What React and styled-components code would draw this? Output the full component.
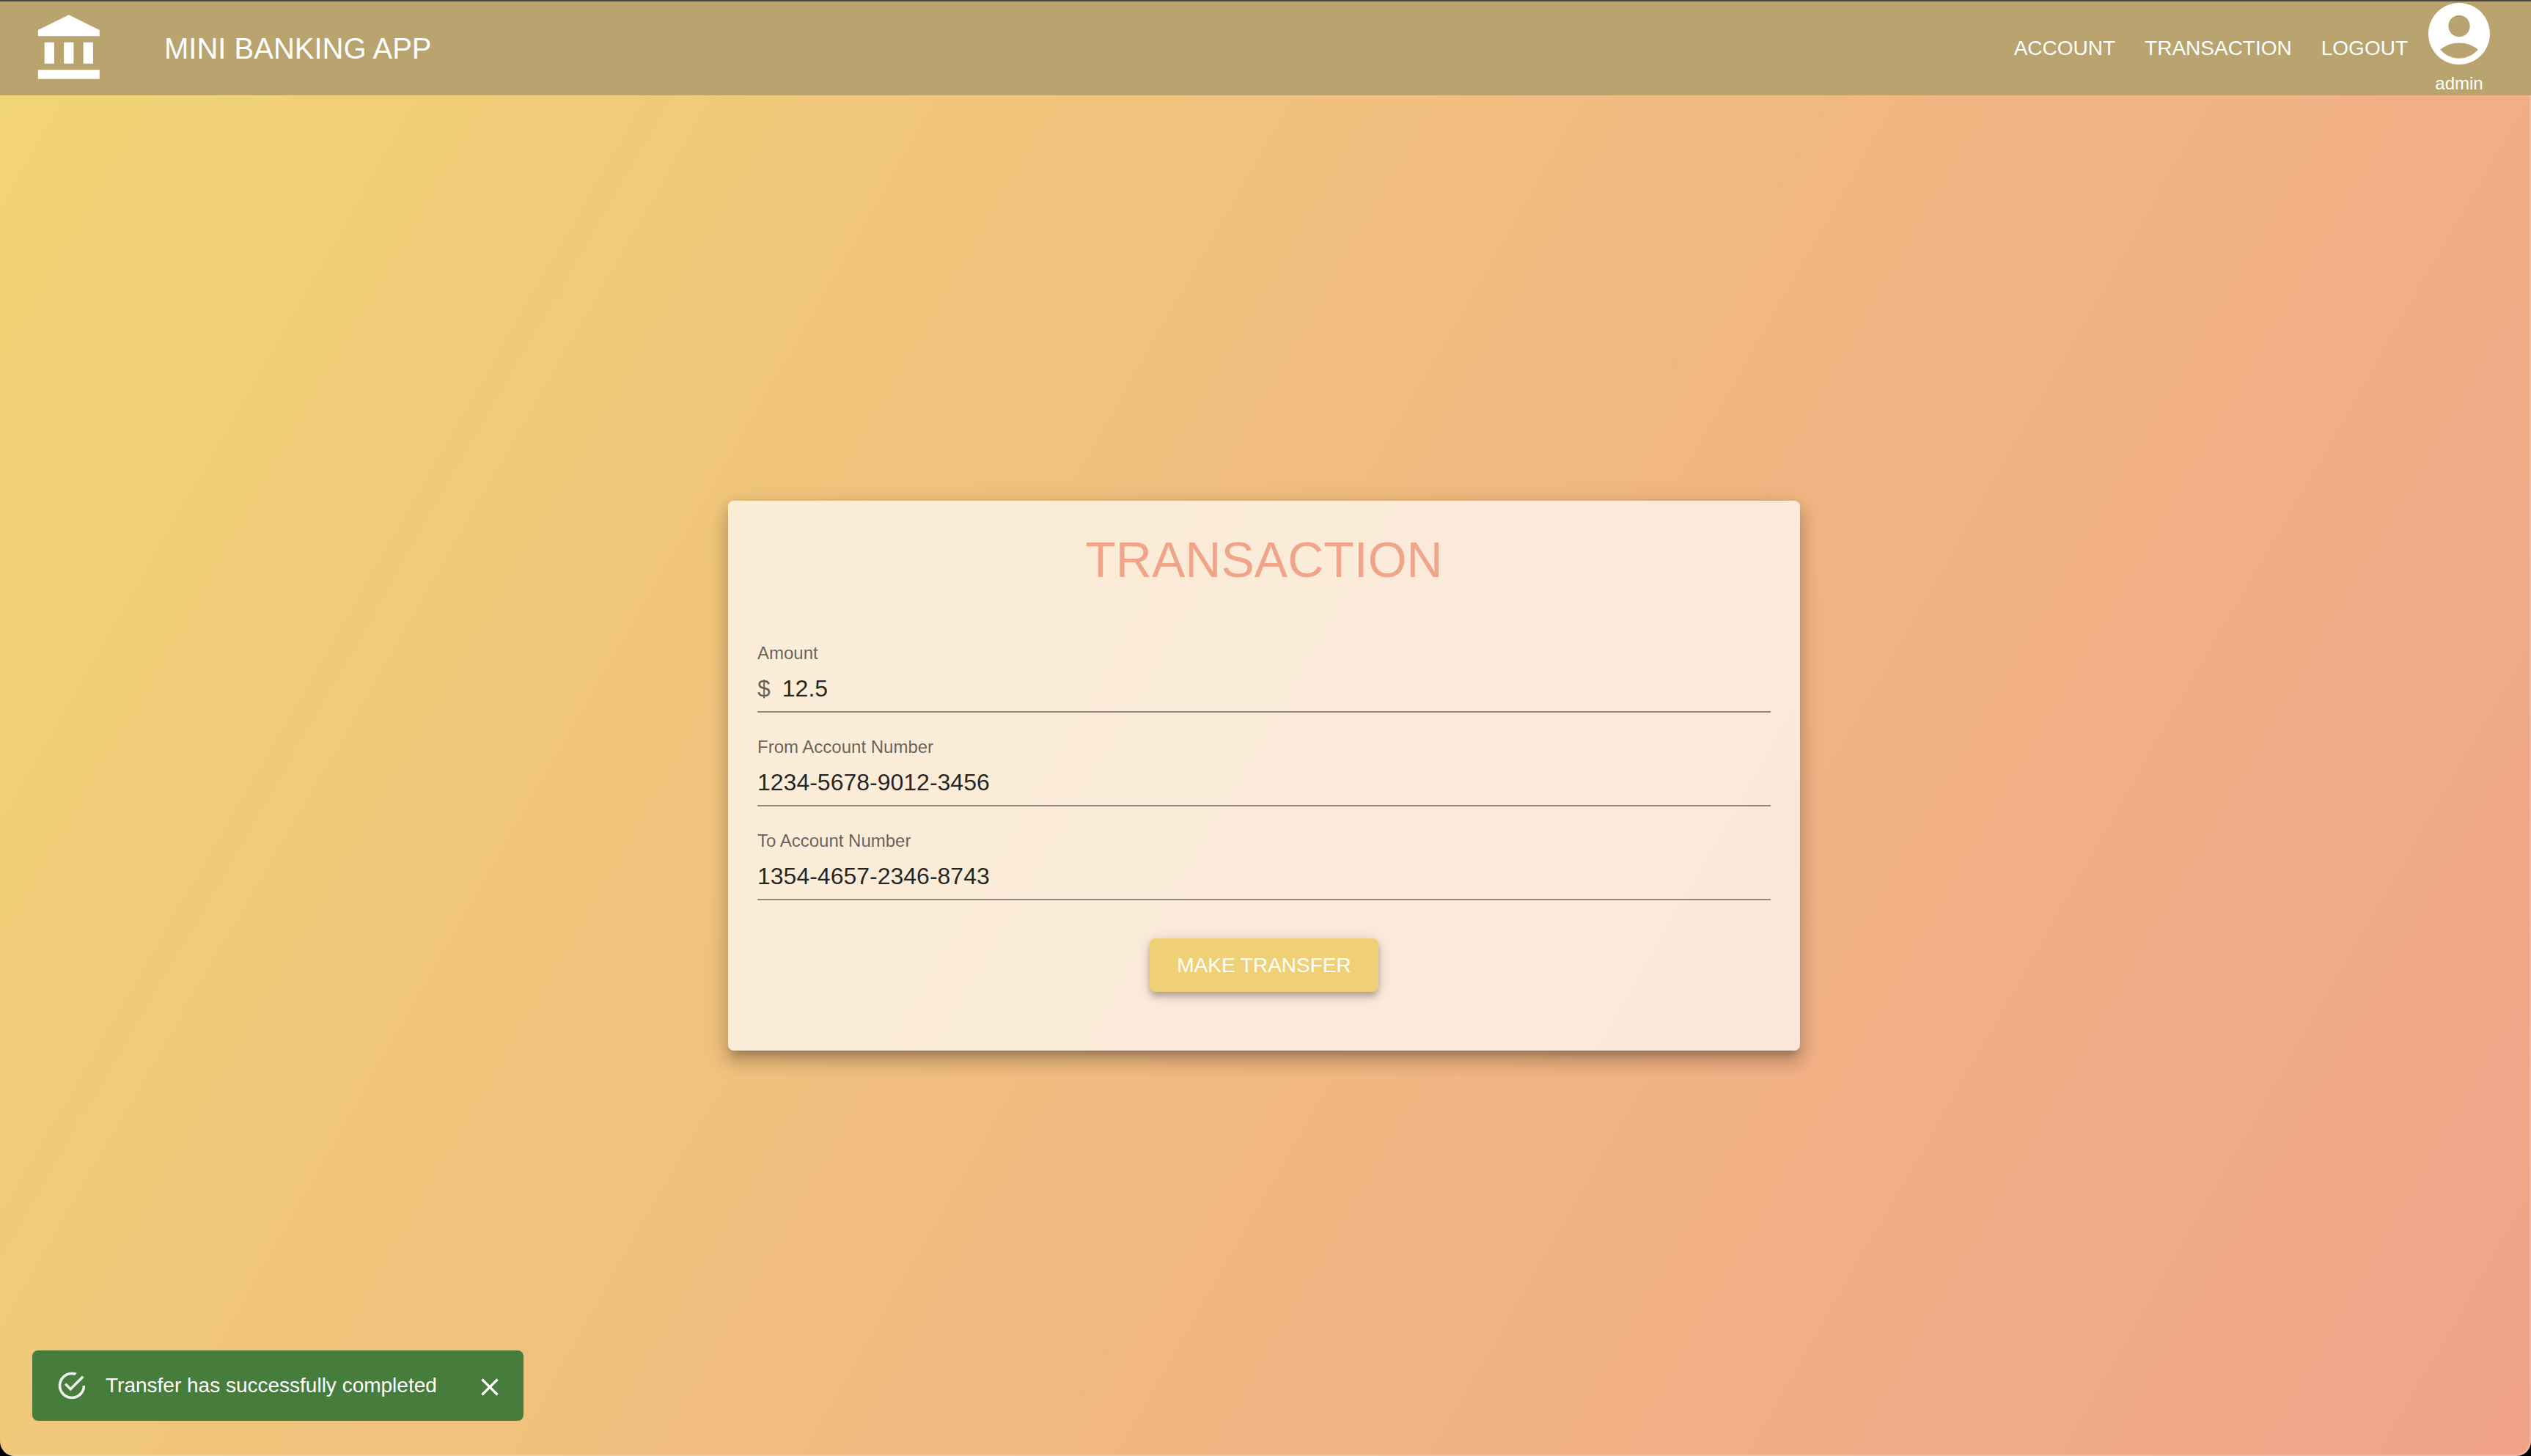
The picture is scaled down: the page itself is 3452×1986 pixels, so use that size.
import React, { useState } from "react";
import styled, { createGlobalStyle } from "styled-components";

const GlobalStyle = createGlobalStyle`
  *, *::before, *::after { box-sizing: border-box; }
  body {
    margin: 0;
    background: #000;
    font-family: "Liberation Sans", Helvetica, Arial, sans-serif;
  }
`;

const Page = styled.div`
  display: flex;
  flex-direction: column;
  min-height: 100vh;
  overflow: hidden;
  border-top: 2px solid #474747;
  border-radius: 0 0 20px 20px;
  background: linear-gradient(120deg, #f1d574, #f0bb80 50%, #f0a38a);
  box-shadow: inset -2px -2px 0 rgba(255, 255, 255, 0.2);
`;

const AppBar = styled.header`
  display: flex;
  align-items: center;
  height: 128px;
  padding: 0 56px 0 43px;
  color: #fff;
  background: #b9a36f;
`;

const BankIcon = styled.svg`
  width: 106px;
  height: 100px;
  fill: currentColor;
`;

const Brand = styled.h1`
  flex: 1;
  margin: 0;
  padding-left: 75px;
  font-size: 40px;
  font-weight: 400;
  line-height: 64px;
`;

const Nav = styled.nav`
  display: flex;
`;

const NavLink = styled.a`
  padding: 12px 20px;
  color: inherit;
  font-size: 28px;
  line-height: 48px;
  text-decoration: none;
`;

const Profile = styled.div`
  display: flex;
  flex-direction: column;
  align-items: center;
  gap: 12px;
  padding-left: 8px;
  font-size: 24px;
  line-height: 28px;
`;

const Avatar = styled.svg`
  width: 84px;
  height: 84px;
  fill: currentColor;
`;

const Main = styled.main`
  display: flex;
  flex: 1;
  align-items: center;
  justify-content: center;
  padding-right: 4px;
`;

const Card = styled.form`
  display: flex;
  flex-direction: column;
  width: 100%;
  max-width: 1462px;
  padding: 40px 40px 80px;
  border-radius: 8px;
  background: rgba(255, 255, 255, 0.7);
  box-shadow:
    0 10px 10px -6px rgba(0, 0, 0, 0.2),
    0 16px 20px 2px rgba(0, 0, 0, 0.14),
    0 6px 28px 4px rgba(0, 0, 0, 0.12);
`;

const CardTitle = styled.h2`
  margin: 0 0 73px;
  color: #f0a58a;
  font-size: 68px;
  font-weight: 400;
  line-height: 80px;
  text-align: center;
`;

const Fields = styled.div`
  display: flex;
  flex-direction: column;
  gap: 32px;
`;

const FieldBox = styled.div`
  display: flex;
  flex-direction: column;
  gap: 10px;
`;

const Label = styled.label`
  color: rgba(0, 0, 0, 0.6);
  font-size: 24px;
  line-height: 30px;
`;

const InputRow = styled.div`
  display: flex;
  gap: 16px;
  padding-bottom: 8px;
  border-bottom: 2px solid rgba(0, 0, 0, 0.42);
  font-size: 32px;
  line-height: 46px;
`;

const Prefix = styled.span`
  color: rgba(0, 0, 0, 0.6);
`;

const Input = styled.input`
  flex: 1;
  min-width: 0;
  height: 46px;
  padding: 0;
  border: 0;
  outline: 0;
  color: rgba(0, 0, 0, 0.87);
  background: transparent;
  font: inherit;
`;

const SubmitButton = styled.button`
  align-self: center;
  min-width: 312px;
  margin-top: 52px;
  padding: 12px 32px;
  border: 0;
  border-radius: 8px;
  color: #fff;
  background: #efd077;
  font-family: inherit;
  font-size: 28px;
  line-height: 49px;
  box-shadow:
    0 4px 8px -2px rgba(0, 0, 0, 0.2),
    0 8px 10px rgba(0, 0, 0, 0.14),
    0 2px 20px rgba(0, 0, 0, 0.12);
`;

const Toast = styled.div`
  position: fixed;
  bottom: 48px;
  left: 44px;
  display: flex;
  align-items: center;
  min-width: 670px;
  height: 96px;
  padding: 0 26px 0 32px;
  border-radius: 8px;
  color: #fff;
  background: #467d3c;
`;

const ToastIcon = styled.svg`
  width: 44px;
  height: 44px;
  fill: currentColor;
  opacity: 0.9;
`;

const ToastText = styled.p`
  flex: 1;
  margin: 0;
  padding: 0 36px 0 24px;
  font-size: 28px;
  line-height: 40px;
`;

const CloseButton = styled.button`
  display: flex;
  margin-top: 4px;
  padding: 0;
  border: 0;
  color: inherit;
  background: transparent;

  svg {
    width: 40px;
    height: 40px;
    fill: currentColor;
  }
`;

function Field({ id, label, prefix, initial }) {
  const [value, setValue] = useState(initial);
  return (
    <FieldBox>
      <Label htmlFor={id}>{label}</Label>
      <InputRow>
        {prefix && <Prefix>{prefix}</Prefix>}
        <Input id={id} value={value} onChange={(e) => setValue(e.target.value)} />
      </InputRow>
    </FieldBox>
  );
}

export default function App() {
  const [open, setOpen] = useState(true);
  return (
    <Page>
      <GlobalStyle />
      <AppBar>
        <BankIcon viewBox="0 0 24 24" preserveAspectRatio="none" aria-hidden="true">
          <path d="M4 10v7h3v-7H4zm6 0v7h3v-7h-3zM2 22h19v-3H2v3zm14-12v7h3v-7h-3zm-4.5-9L2 6v2h19V6l-9.5-5z" />
        </BankIcon>
        <Brand>MINI BANKING APP</Brand>
        <Nav>
          <NavLink href="#account">ACCOUNT</NavLink>
          <NavLink href="#transaction">TRANSACTION</NavLink>
          <NavLink href="#logout">LOGOUT</NavLink>
        </Nav>
        <Profile>
          <Avatar viewBox="2 2 20 20" aria-hidden="true">
            <path d="M12 2C6.48 2 2 6.48 2 12s4.48 10 10 10 10-4.48 10-10S17.52 2 12 2zm0 4c1.93 0 3.5 1.57 3.5 3.5S13.93 13 12 13s-3.5-1.57-3.5-3.5S10.07 6 12 6zm0 14c-2.03 0-4.43-.82-6.14-2.88C7.55 15.8 9.68 15 12 15s4.45.8 6.14 2.12C16.43 19.18 14.03 20 12 20z" />
          </Avatar>
          <span>admin</span>
        </Profile>
      </AppBar>
      <Main>
        <Card onSubmit={(e) => e.preventDefault()}>
          <CardTitle>TRANSACTION</CardTitle>
          <Fields>
            <Field id="amount" label="Amount" prefix="$" initial="12.5" />
            <Field id="from" label="From Account Number" initial="1234-5678-9012-3456" />
            <Field id="to" label="To Account Number" initial="1354-4657-2346-8743" />
          </Fields>
          <SubmitButton type="submit">MAKE TRANSFER</SubmitButton>
        </Card>
      </Main>
      {open && (
        <Toast role="alert">
          <ToastIcon viewBox="0 0 24 24" aria-hidden="true">
            <path d="M20,12A8,8 0 0,1 12,20A8,8 0 0,1 4,12A8,8 0 0,1 12,4C12.76,4 13.5,4.11 14.2,4.31L15.77,2.74C14.61,2.26 13.34,2 12,2A10,10 0 0,0 2,12A10,10 0 0,0 12,22A10,10 0 0,0 22,12M7.91,10.08L6.5,11.5L11,16L21,6L19.59,4.58L11,13.17L7.91,10.08Z" />
          </ToastIcon>
          <ToastText>Transfer has successfully completed</ToastText>
          <CloseButton type="button" aria-label="Close" onClick={() => setOpen(false)}>
            <svg viewBox="0 0 24 24" aria-hidden="true">
              <path d="M19 6.41L17.59 5 12 10.59 6.41 5 5 6.41 10.59 12 5 17.59 6.41 19 12 13.41 17.59 19 19 17.59 13.41 12z" />
            </svg>
          </CloseButton>
        </Toast>
      )}
    </Page>
  );
}
